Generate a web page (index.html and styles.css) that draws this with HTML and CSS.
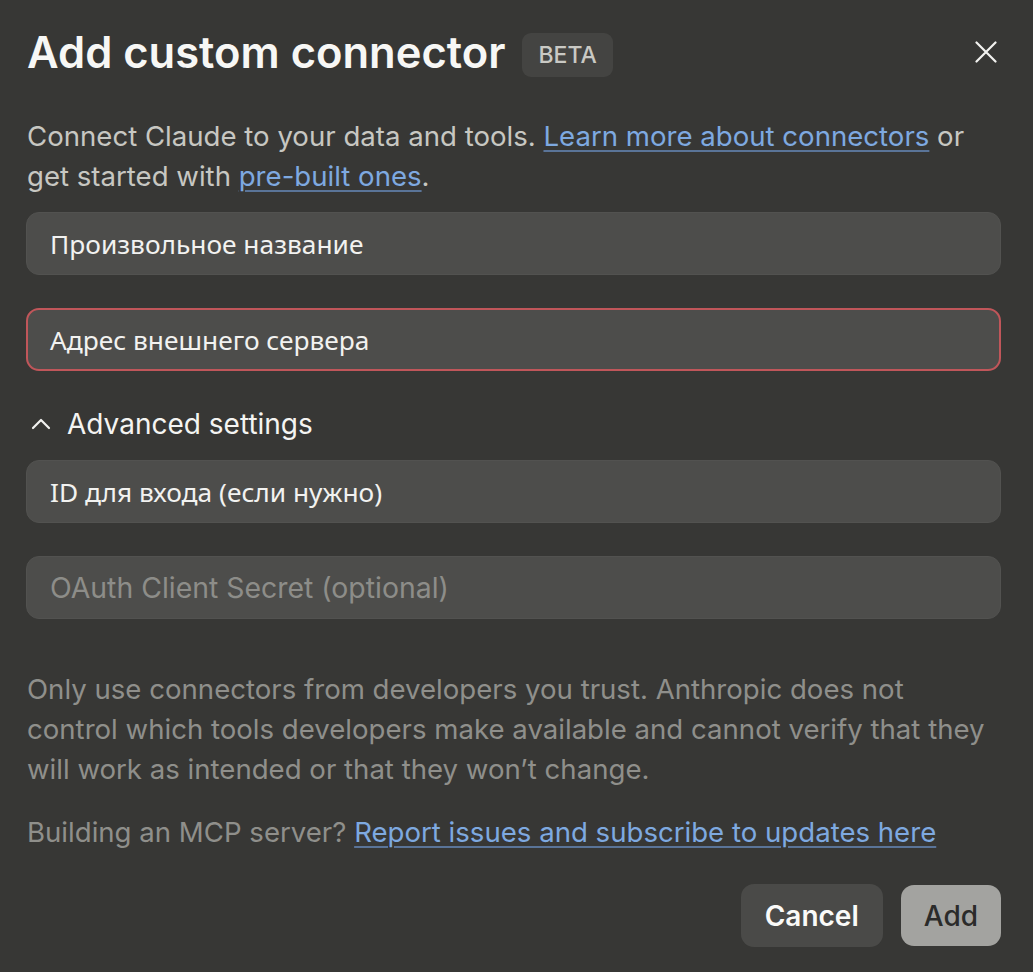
FILE: index.html
```html
<!DOCTYPE html>
<html lang="en">
<head>
<meta charset="utf-8">
<link rel="stylesheet" href="styles.css">
</head>
<body>
<div class="dialog">
  <header class="head">
    <h1 class="title">Add custom connector</h1>
    <span class="badge">BETA</span>
    <button class="close" aria-label="Close">
      <svg width="22" height="22" viewBox="0 0 22 22"><path d="M1.5 1.5L20.5 20.5M20.5 1.5L1.5 20.5" stroke="#f2f2f0" stroke-width="2.2" stroke-linecap="round" fill="none"/></svg>
    </button>
  </header>
  <p class="intro">Connect Claude to your data and tools. <a href="#">Learn more about connectors</a> or get started with <a href="#">pre-built ones</a>.</p>
  <div class="fields">
    <div class="field">Произвольное название</div>
    <div class="field error">Адрес внешнего сервера</div>
  </div>
  <div class="advanced">
    <svg width="20" height="12" viewBox="0 0 20 12"><path d="M2 10L10 2L18 10" stroke="#f2f2f0" stroke-width="2.2" stroke-linecap="round" stroke-linejoin="round" fill="none"/></svg>
    <span>Advanced settings</span>
  </div>
  <div class="fields">
    <div class="field">ID для входа (если нужно)</div>
    <div class="field placeholder">OAuth Client Secret (optional)</div>
  </div>
  <p class="note">Only use connectors from developers you trust. Anthropic does not control which tools developers make available and cannot verify that they will work as intended or that they won’t change.</p>
  <p class="note build">Building an MCP server? <a href="#">Report issues and subscribe to updates here</a></p>
  <div class="actions">
    <button class="btn cancel">Cancel</button>
    <button class="btn add">Add</button>
  </div>
</div>
</body>
</html>
```
FILE: styles.css
```css
html, body {
  margin: 0;
  padding: 0;
  background: #373735;
}
body {
  font-family: Inter, "Noto Sans", sans-serif;
  color: #c7c7c2;
}
.dialog {
  padding: 24px 32px 24px 26px;
  display: flex;
  flex-direction: column;
}
.head {
  display: flex;
  align-items: center;
  height: 56px;
}
.title {
  margin: 0 0 0 1px;
  font-size: 43.5px;
  font-weight: 600;
  color: #f7f7f5;
  letter-spacing: 0;
  line-height: 56px;
}
.badge {
  margin: 5px 0 0 17px;
  background: #444442;
  color: #c9c9c4;
  font-size: 23px;
  font-weight: 500;
  padding: 8px 16px;
  border-radius: 9px;
  line-height: 28px;
}
.close {
  margin-left: auto;
  background: none;
  border: 0;
  padding: 0;
  width: 22px;
  height: 22px;
  margin-right: 4px;
  display: flex;
}
.intro {
  margin: 36px 0 0 1px;
  font-size: 27.6px;
  line-height: 40px;
  color: #c7c7c2;
}
a {
  color: #7ea9e0;
  text-decoration: underline;
  text-decoration-color: #5a7498;
  text-underline-offset: 4px;
  text-decoration-thickness: 2px;
}
.fields {
  display: flex;
  flex-direction: column;
  gap: 33px;
  margin-top: 16px;
}
.field {
  height: 63px;
  box-sizing: border-box;
  background: #4d4d4b;
  border-radius: 13px;
  padding: 0 23px;
  display: flex;
  align-items: center;
  font-family: "Noto Sans", sans-serif;
  font-size: 26.3px;
  color: #f2f2f0;
  border: 1px solid #525250;
}
.field.error {
  border: 2px solid #c0565a;
  padding-left: 22px;
}
.field.placeholder {
  color: #8d8d89;
  font-family: Inter, sans-serif;
  font-size: 28.4px;
}
.advanced {
  display: flex;
  align-items: center;
  gap: 16px;
  margin: 29px 0 0 5px;
  height: 48px;
  font-size: 28px;
  color: #f4f4f2;
}
.advanced + .fields {
  margin-top: 12px;
}
.note {
  margin: 50px 0 0 1px;
  font-size: 27.6px;
  line-height: 40px;
  color: #8f8f8b;
}
.note.build {
  margin-top: 23px;
}
.actions {
  display: flex;
  justify-content: flex-end;
  align-items: center;
  gap: 18px;
  margin-top: 32px;
}
.btn {
  height: 63px;
  border: 0;
  border-radius: 13px;
  font-family: Inter, sans-serif;
  font-size: 28px;
  padding: 0 24px;
}
.cancel {
  background: #4a4a48;
  color: #fafaf8;
  font-weight: 600;
}
.add {
  background: #a3a3a0;
  color: #2b2b2a;
  font-weight: 500;
  height: 61px;
  padding: 0 23px;
}
```
